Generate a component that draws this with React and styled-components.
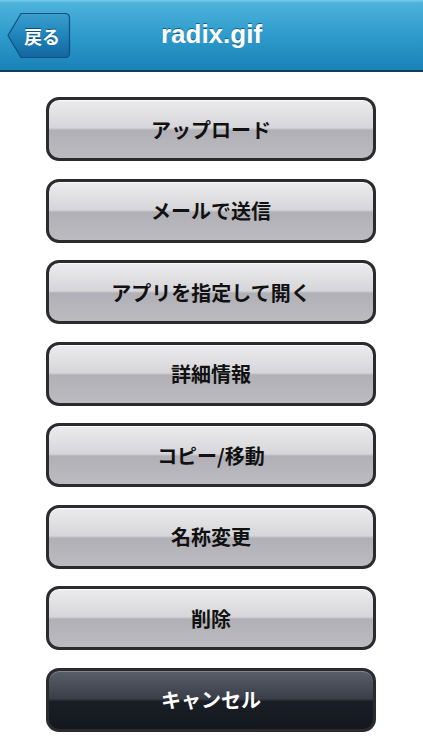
import React from "react";
import styled, { createGlobalStyle } from "styled-components";

const GlobalStyle = createGlobalStyle`
  html, body {
    margin: 0;
    padding: 0;
    background: #ffffff;
  }
  body {
    font-family: "Liberation Sans", "Noto Sans CJK JP", sans-serif;
  }
`;

const actions = [
  "アップロード",
  "メールで送信",
  "アプリを指定して開く",
  "詳細情報",
  "コピー/移動",
  "名称変更",
  "削除",
];

function App() {
  return (
    <Page>
      <GlobalStyle />
      <NavBar>
        <BackButton>
          <BackShape viewBox="0 0 64 47" preserveAspectRatio="none">
            <defs>
              <linearGradient id="backFill" x1="0" y1="0" x2="0" y2="1">
                <stop offset="0" stopColor="#3a9fcc" />
                <stop offset="0.5" stopColor="#1f84ba" />
                <stop offset="1" stopColor="#1466a0" />
              </linearGradient>
            </defs>
            <path
              d="M1 23.5 L14 1.5 H58 Q62.5 1.5 62.5 6 V41 Q62.5 45.5 58 45.5 H14 Z"
              fill="url(#backFill)"
              stroke="#0f5080"
              strokeWidth="1.2"
            />
          </BackShape>
          <BackLabel>戻る</BackLabel>
        </BackButton>
        <Title>radix.gif</Title>
      </NavBar>
      <ActionList>
        {actions.map((label) => (
          <ActionButton key={label}>{label}</ActionButton>
        ))}
        <ActionButton dark>キャンセル</ActionButton>
      </ActionList>
    </Page>
  );
}

const Page = styled.div`
  width: 423px;
  min-height: 750px;
  background: #ffffff;
`;

const NavBar = styled.div`
  position: relative;
  height: 72px;
  box-sizing: border-box;
  display: flex;
  align-items: center;
  justify-content: center;
  background: linear-gradient(
    to bottom,
    #78cbe8 0px,
    #4cb2db 3px,
    #2f9bcc 35px,
    #1a82b7 69px
  );
  border-bottom: 2px solid #0d3f60;
`;

const BackButton = styled.div`
  position: absolute;
  left: 7px;
  top: 12px;
  width: 64px;
  height: 47px;
  display: flex;
  align-items: center;
  justify-content: center;
`;

const BackShape = styled.svg`
  position: absolute;
  inset: 0;
  width: 100%;
  height: 100%;
`;

const BackLabel = styled.span`
  position: relative;
  margin-left: 6px;
  color: #ffffff;
  font-family: "Noto Sans CJK JP", sans-serif;
  font-weight: 700;
  font-size: 18px;
  text-shadow: 0 -1px 0 rgba(0, 40, 80, 0.6);
`;

const Title = styled.h1`
  margin: 0;
  color: #ffffff;
  font-family: "Liberation Sans", "Noto Sans CJK JP", sans-serif;
  font-weight: 700;
  font-size: 26px;
  text-shadow: 0 -1px 0 rgba(0, 50, 90, 0.6);
  transform: translateY(-1px);
`;

const ActionList = styled.div`
  display: flex;
  flex-direction: column;
  gap: 17.5px;
  padding: 25px 47px 0 46px;
`;

const ActionButton = styled.div`
  height: 64px;
  box-sizing: border-box;
  border: 3px solid #2b2b2d;
  border-radius: 13px;
  display: flex;
  align-items: center;
  justify-content: center;
  font-family: "Noto Sans CJK JP", sans-serif;
  font-weight: 700;
  font-size: 20px;
  color: ${(p) => (p.dark ? "#ffffff" : "#111111")};
  background: ${(p) =>
    p.dark
      ? "linear-gradient(to bottom, #5a5e68 0%, #3a3e48 48%, #1a1e26 52%, #14171e 100%)"
      : "linear-gradient(to bottom, #ececee 0%, #d6d6da 48%, #b0b0b6 52%, #bbbbc0 100%)"};
  box-shadow: inset 0 1px 0 rgba(255, 255, 255, ${(p) => (p.dark ? 0.25 : 0.8)});
`;

export default App;
